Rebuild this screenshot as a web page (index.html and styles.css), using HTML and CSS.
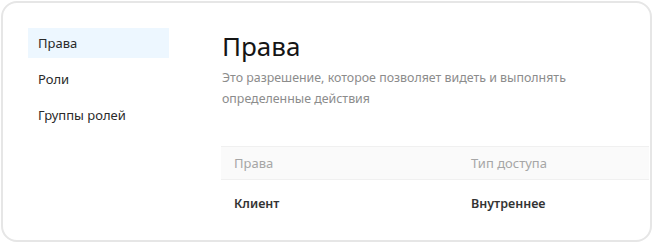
FILE: index.html
```html
<!DOCTYPE html>
<html>
<head>
  <meta charset="utf-8">
  <link rel="stylesheet" href="styles.css">
</head>
<body>
  <div class="card">
    <nav class="sidebar">
      <div class="nav-item active">Права</div>
      <div class="nav-item">Роли</div>
      <div class="nav-item">Группы ролей</div>
    </nav>

    <main class="content">
      <h1 class="title">Права</h1>
      <p class="description">Это разрешение, которое позволяет видеть и выполнять определенные действия</p>

      <table class="rights-table">
        <thead>
          <tr>
            <th class="col-name">Права</th>
            <th>Тип доступа</th>
          </tr>
        </thead>
        <tbody>
          <tr>
            <td class="col-name">Клиент</td>
            <td>Внутреннее</td>
          </tr>
        </tbody>
      </table>
    </main>
  </div>
</body>
</html>
```

FILE: styles.css
```css
/* Базовые стили */
body {
  margin: 0;
  padding: 1px;
  background: #ffffff;
  font-family: "Noto Sans", "DejaVu Sans", sans-serif;
  color: #222222;
}

.card {
  box-sizing: border-box;
  width: 651px;
  height: 241px;
  border: 2px solid #e6e6e6;
  border-radius: 16px;
  display: flex;
  overflow: hidden;
}

/* Боковое меню */
.sidebar {
  width: 141px;
  padding: 25px 0 0 25px;
  display: flex;
  flex-direction: column;
  gap: 6px;
}

.nav-item {
  height: 30px;
  line-height: 30px;
  padding-left: 10px;
  font-size: 13px;
  color: #2a2a2a;
}

.nav-item.active {
  background: #edf7ff;
}

/* Основная часть */
.content {
  flex: 1;
  padding: 28px 1px 0 52px;
}

.title {
  margin: 0 0 0 1px;
  font-size: 26px;
  font-weight: 400;
  line-height: 30px;
  color: #151515;
}

.description {
  margin: 6px 0 0 1px;
  max-width: 370px;
  font-size: 12.4px;
  line-height: 21px;
  color: #8c8c8c;
}

.rights-table {
  width: 100%;
  margin-top: 37px;
  border-collapse: collapse;
  font-size: 13px;
}

.rights-table th {
  height: 32px;
  padding: 0 13px;
  text-align: left;
  font-weight: 400;
  color: #a6a6a6;
  background: #fafafa;
  border-top: 1px solid #f0f0f0;
  border-bottom: 1px solid #f0f0f0;
}

.rights-table td {
  height: 46px;
  padding: 0 13px;
  font-size: 12.5px;
  font-weight: 600;
  color: #333333;
}

.col-name {
  width: 211px;
}
```
